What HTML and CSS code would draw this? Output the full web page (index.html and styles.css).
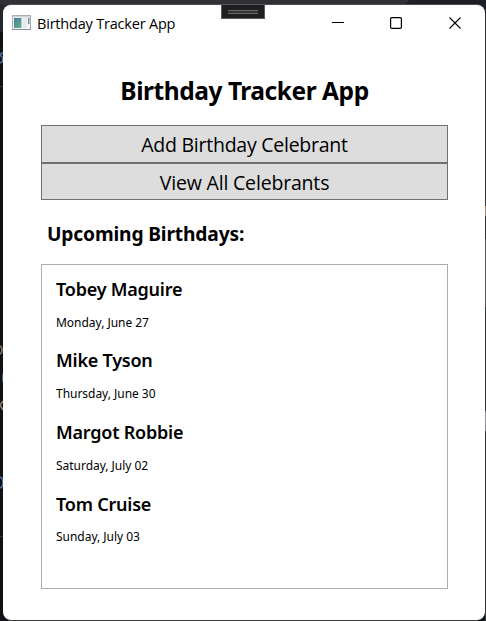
FILE: index.html
```html
<!DOCTYPE html>
<html lang="en">
<head>
<meta charset="utf-8">
<title>Birthday Tracker App</title>
<link rel="stylesheet" href="styles.css">
</head>
<body>
<svg class="backdrop" width="486" height="621" viewBox="0 0 486 621" aria-hidden="true">
  <rect width="486" height="621" fill="#111217"/>
  <path d="M0 0h410l-5 5H0z" fill="#303134"/>
  <path d="M410 0h76v16h-4L405 5z" fill="#1d1f25"/>
  <path d="M0 5h10L3 14v18H0z" fill="#25262a"/>
  <path d="M0 86.500h3M0 536.500h3" stroke="#303238"/>
  <g fill="none" stroke="#5672ae" stroke-width="1.500">
    <path d="M3 53Q0 53 1 56Q4 58 2 62L0 63M3 374v8M0 477Q3 478 3 483Q3 487 0 488"/>
  </g>
  <path d="M0 346Q2 347 2 350Q2 353 0 354M3 401L0 405L3 410" fill="none" stroke="#96816c" stroke-width="1.500"/>
  <path d="M485 14h1v607h-1z" fill="#35353a"/>
  <path d="M485 206h1v10h-1z" fill="#a98370"/>
  <path d="M485 239h1v68h-1z" fill="#5c5052"/>
  <path d="M485 411h1v20h-1z" fill="#92929a"/>
  <path d="M8 620h470v1H8z" fill="#3a3a3c"/>
</svg>
<div class="debug-handle"><span></span></div>
<main class="window">
  <header class="titlebar">
    <svg class="app-icon" width="19" height="16" viewBox="0 0 19 16" aria-hidden="true">
      <defs>
        <linearGradient id="pane" x1="0" y1="0" x2="1" y2="1">
          <stop offset="0" stop-color="#4a78a4"/><stop offset="1" stop-color="#62b58a"/>
        </linearGradient>
      </defs>
      <path d="M.5.5h18v14H.5z" fill="#f5f5f5" stroke="#a9adad"/>
      <path d="M1 1h17v1.500H1z" fill="#d0d3d4"/>
      <path d="M2 3h7.500v10H2z" fill="url(#pane)"/>
      <path d="M11 3h4v10h-4z" fill="#e8e9eb"/>
      <path d="M16 3h1.500v6H16z" fill="#5b9a9c"/>
      <path d="M0 14.500h19" stroke="#8c9090"/>
    </svg>
    <span class="title">Birthday Tracker App</span>
    <svg class="controls" width="130" height="12" viewBox="0 0 130 12" fill="none" stroke="#000" aria-hidden="true">
      <path d="M0 5.500h12"/>
      <rect x="58.600" y=".6" width="10.800" height="10.800" rx="1.200" stroke-width="1.200"/>
      <path d="M117.500.5l11 11M128.500.5l-11 11" stroke-width="1.100"/>
    </svg>
  </header>
  <section class="content">
    <h1>Birthday Tracker App</h1>
    <button class="action">Add Birthday Celebrant</button>
    <button class="action second">View All Celebrants</button>
    <h2>Upcoming Birthdays:</h2>
    <ul class="list">
      <li><h3>Tobey Maguire</h3><p>Monday, June 27</p></li>
      <li><h3>Mike Tyson</h3><p>Thursday, June 30</p></li>
      <li><h3>Margot Robbie</h3><p>Saturday, July 02</p></li>
      <li><h3>Tom Cruise</h3><p>Sunday, July 03</p></li>
    </ul>
  </section>
</main>
</body>
</html>
```

FILE: styles.css
```css
* { box-sizing: border-box; margin: 0; padding: 0; }

body {
  width: 486px;
  height: 621px;
  padding: 5px 1px 1px 3px;
  overflow: hidden;
  background: #111217;
  color: #000;
  font-family: "Noto Sans", "Open Sans", sans-serif;
}

.backdrop { position: absolute; left: 0; top: 0; }

.window {
  position: relative;
  width: 482px;
  height: 615px;
  border-radius: 8px;
  background: #fff;
  box-shadow: 0 -1px 0 #4b4c4e;
}

.debug-handle {
  position: absolute;
  z-index: 2;
  left: 221px;
  top: 4px;
  width: 44px;
  height: 15px;
  padding: 5px 6px;
  border: 1px solid #5a5a5a;
  background: #1f1f1f;
}

.debug-handle span {
  display: block;
  height: 4px;
  border: solid #686868;
  border-width: 1px 0;
  background: #333;
}

.titlebar {
  display: flex;
  height: 36px;
  padding: 0 23px 0 9px;
  align-items: center;
}

.app-icon { flex: none; }

.title {
  margin-left: 6px;
  padding-top: 2px;
  font-family: "Open Sans", "Noto Sans", sans-serif;
  font-size: 14.5px;
  line-height: 20px;
  letter-spacing: -.2px;
  white-space: nowrap;
}

.controls { margin-left: auto; }

.content { padding: 0 37px 0 38px; }

h1 {
  margin-top: 32px;
  font-size: 24.5px;
  line-height: 36px;
  letter-spacing: -.45px;
  text-align: center;
}

.action {
  display: block;
  width: 407px;
  height: 38px;
  padding-top: 2px;
  border: 1px solid #707070;
  background: #ddd;
  color: #000;
  font: 380 19.5px/34px "Open Sans", "Noto Sans", sans-serif;
  letter-spacing: -.25px;
}

h1 + .action { margin-top: 16px; }

.second {
  height: 37px;
  line-height: 33px;
  letter-spacing: -.18px;
}

h2 {
  margin: 20px 0 0 6px;
  font-size: 19.2px;
  line-height: 28px;
  letter-spacing: -.15px;
}

.list {
  display: flex;
  width: 407px;
  height: 325px;
  margin-top: 16px;
  padding: 11.800px 14px;
  border: 1px solid #abadb3;
  flex-direction: column;
  gap: 17.800px;
  list-style: none;
}

h3 {
  font-size: 18px;
  font-weight: 560;
  line-height: 24px;
  letter-spacing: -.22px;
}

p {
  margin-top: 13.800px;
  font-size: 12px;
  line-height: 16px;
  letter-spacing: -.03px;
}
```
